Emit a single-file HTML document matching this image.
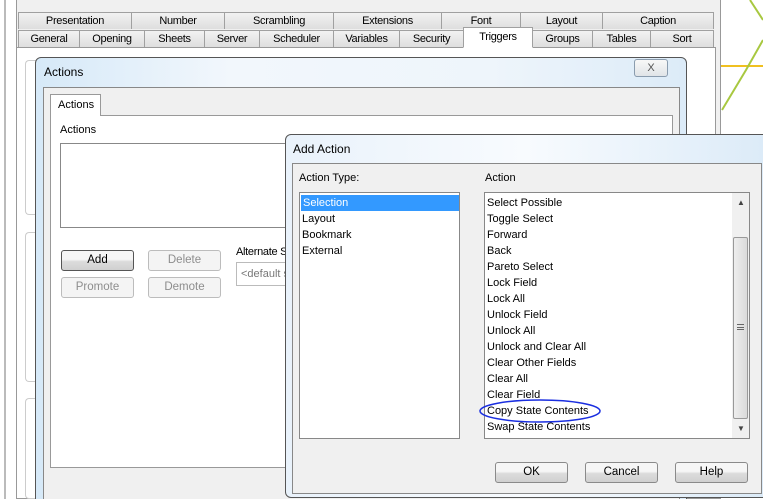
<!DOCTYPE html><html><head><style>
html,body{margin:0;padding:0;overflow:hidden;width:763px;height:499px}
#w{position:relative;width:763px;height:499px;overflow:hidden;background:#f0f0f0;font-family:"Liberation Sans",sans-serif;font-size:11px;color:#000}
.a{position:absolute;box-sizing:border-box}
.tab{position:absolute;box-sizing:border-box;border:1px solid #a0a0a0;border-bottom:none;background:linear-gradient(#f2f2f2,#dedede);text-align:center;line-height:16px;font-size:11px;letter-spacing:-0.3px}
.btn{position:absolute;box-sizing:border-box;border:1px solid #8a8a8a;border-radius:3px;background:linear-gradient(#f6f6f6 45%,#dcdcdc 55%,#d0d0d0);text-align:center;line-height:18px;font-size:11.5px}
.dis{border-color:#bcbcbc;color:#8d8d8d;background:#f4f4f4}
.li{height:16px;line-height:16px;padding-left:2px;white-space:nowrap;font-size:11px}
</style></head><body><div id="w">
<div class="a" style="left:0;top:0;width:24px;height:499px;background:#fff;border-right:1px solid #aaa"></div>
<div class="a" style="left:4px;top:0;width:2px;height:499px;background:#bbb"></div>
<div class="a" style="left:720px;top:0;width:43px;height:499px;background:#fff;border-left:1px solid #999"></div>
<svg class="a" style="left:720px;top:0" width="43" height="140"><path d="M0 66 L43 66" stroke="#f0c020" stroke-width="2"/><path d="M2 110 L26 70 L43 40" stroke="#a8c840" stroke-width="2" fill="none"/><path d="M30 0 L43 20" stroke="#a8c840" stroke-width="2"/></svg>
<div class="a" style="left:16px;top:0;width:705px;height:499px;background:#f0f0f0;border:1px solid #999;border-top:none"></div>
<div class="a" style="left:16px;top:47px;width:700px;height:452px;background:#fff;border:1px solid #999"></div>
<div class="tab" style="left:18px;top:12px;width:114px;height:17px">Presentation</div>
<div class="tab" style="left:131px;top:12px;width:94px;height:17px">Number</div>
<div class="tab" style="left:224px;top:12px;width:110px;height:17px">Scrambling</div>
<div class="tab" style="left:333px;top:12px;width:109px;height:17px">Extensions</div>
<div class="tab" style="left:441px;top:12px;width:80px;height:17px">Font</div>
<div class="tab" style="left:520px;top:12px;width:83px;height:17px">Layout</div>
<div class="tab" style="left:602px;top:12px;width:112px;height:17px">Caption</div>
<div class="tab" style="left:18px;top:30px;width:62px;height:17px">General</div>
<div class="tab" style="left:79px;top:30px;width:66px;height:17px">Opening</div>
<div class="tab" style="left:144px;top:30px;width:61px;height:17px">Sheets</div>
<div class="tab" style="left:204px;top:30px;width:56px;height:17px">Server</div>
<div class="tab" style="left:259px;top:30px;width:75px;height:17px">Scheduler</div>
<div class="tab" style="left:333px;top:30px;width:67px;height:17px">Variables</div>
<div class="tab" style="left:399px;top:30px;width:65px;height:17px">Security</div>
<div class="tab" style="left:463px;top:27px;width:70px;height:21px;background:#fff;line-height:18px;border-bottom:1px solid #fff">Triggers</div>
<div class="tab" style="left:532px;top:30px;width:61px;height:17px">Groups</div>
<div class="tab" style="left:592px;top:30px;width:59px;height:17px">Tables</div>
<div class="tab" style="left:650px;top:30px;width:64px;height:17px">Sort</div>
<div class="a" style="left:25px;top:60px;width:12px;height:155px;border:1px solid #ccc;border-right:none;border-radius:4px 0 0 4px"></div>
<div class="a" style="left:25px;top:232px;width:12px;height:150px;border:1px solid #ccc;border-right:none;border-radius:4px 0 0 4px"></div>
<div class="a" style="left:25px;top:398px;width:12px;height:101px;border:1px solid #ccc;border-right:none;border-radius:4px 0 0 4px"></div>
<!-- Actions dialog -->
<div class="a" style="left:35px;top:57px;width:652px;height:450px;background:linear-gradient(90deg,#d6e9f8,#f2f7fc 30%,#eef5fb 70%,#dcebf8);border:1px solid #555;border-radius:6px 6px 0 0"></div>
<div class="a" style="left:44px;top:65px;font-size:12px">Actions</div>
<div class="a" style="left:634px;top:59px;width:34px;height:18px;border:1px solid #8a9cae;border-radius:3px;background:linear-gradient(#f8f8f8,#e0e4e8);text-align:center;line-height:16px;color:#555;font-size:11px">X</div>
<div class="a" style="left:43px;top:87px;width:637px;height:415px;background:#f0f0f0;border:1px solid #888"></div>
<div class="a" style="left:50px;top:115px;width:623px;height:353px;background:#fff;border:1px solid #999"></div>
<div class="a" style="left:50px;top:94px;width:51px;height:22px;background:#fff;border:1px solid #999;border-bottom:none;line-height:20px;padding-left:7px">Actions</div>
<div class="a" style="left:60px;top:124px">Actions</div>
<div class="a" style="left:60px;top:143px;width:240px;height:85px;border:1px solid #888;background:#fff"></div>
<div class="btn" style="left:61px;top:250px;width:73px;height:21px;border-color:#555">Add</div>
<div class="btn dis" style="left:148px;top:250px;width:73px;height:21px">Delete</div>
<div class="btn dis" style="left:61px;top:277px;width:73px;height:21px">Promote</div>
<div class="btn dis" style="left:148px;top:277px;width:73px;height:21px">Demote</div>
<div class="a" style="left:236px;top:246px;letter-spacing:-0.3px">Alternate S</div>
<div class="a" style="left:236px;top:262px;width:60px;height:24px;border:1px solid #bbb;color:#777;padding:5px 0 0 4px">&lt;default s</div>
<!-- Add Action dialog -->
<div class="a" style="left:285px;top:134px;width:480px;height:364px;background:linear-gradient(90deg,#e9f2fb,#f8fbfe 50%,#dcebf8);border:1px solid #555;border-radius:6px 0 0 6px"></div>
<div class="a" style="left:293px;top:142px;font-size:12px">Add Action</div>
<div class="a" style="left:292px;top:163px;width:470px;height:331px;background:#f0f0f0;border:1px solid #888"></div>
<div class="a" style="left:299px;top:172px">Action Type:</div>
<div class="a" style="left:299px;top:192px;width:161px;height:247px;border:1px solid #888;background:#fff;padding-top:2px">
<div class="li" style="background:#3399ff;color:#fff;margin-left:1px;width:156px;padding-left:2px">Selection</div><div class="li">Layout</div><div class="li">Bookmark</div><div class="li">External</div></div>
<div class="a" style="left:485px;top:172px">Action</div>
<div class="a" style="left:484px;top:192px;width:266px;height:247px;border:1px solid #888;background:#fff;padding-top:2px">
<div class="li">Select Possible</div><div class="li">Toggle Select</div><div class="li">Forward</div><div class="li">Back</div><div class="li">Pareto Select</div><div class="li">Lock Field</div><div class="li">Lock All</div><div class="li">Unlock Field</div><div class="li">Unlock All</div><div class="li">Unlock and Clear All</div><div class="li">Clear Other Fields</div><div class="li">Clear All</div><div class="li">Clear Field</div><div class="li">Copy State Contents</div><div class="li">Swap State Contents</div></div>
<div class="a" style="left:732px;top:193px;width:17px;height:245px;background:#f0f0f0"></div>
<div class="a" style="left:737px;top:198px;font-size:8px;color:#444">▲</div>
<div class="a" style="left:737px;top:424px;font-size:8px;color:#444">▼</div>
<div class="a" style="left:733px;top:237px;width:15px;height:182px;border:1px solid #999;border-radius:2px;background:linear-gradient(90deg,#eee,#dadada)"></div>
<div class="a" style="left:737px;top:324px;width:7px;height:6px;border-top:1px solid #666;border-bottom:1px solid #666"><div style="border-top:1px solid #666;margin-top:2px"></div></div>
<svg class="a" style="left:476px;top:398px" width="130" height="30"><ellipse cx="64" cy="13" rx="60" ry="11" fill="none" stroke="#1a2ee0" stroke-width="1.5"/></svg>
<div class="btn" style="left:495px;top:462px;width:73px;height:21px">OK</div>
<div class="btn" style="left:585px;top:462px;width:73px;height:21px">Cancel</div>
<div class="btn" style="left:675px;top:462px;width:73px;height:21px">Help</div>
</div></body></html>
